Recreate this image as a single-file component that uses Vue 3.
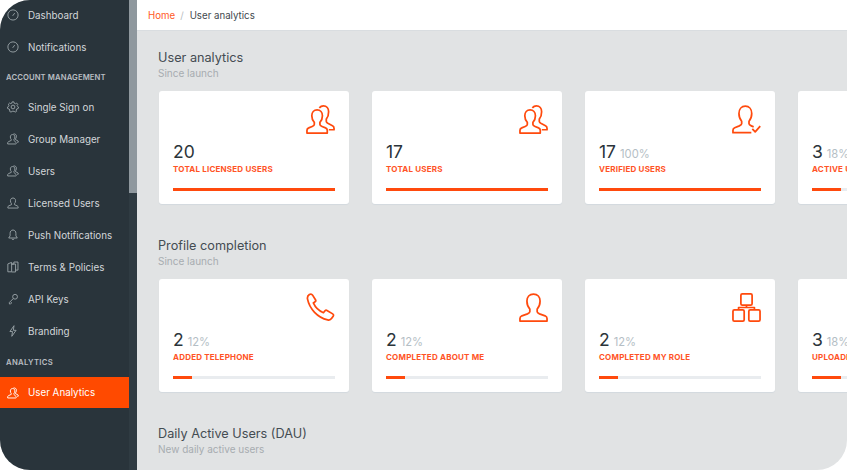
<script setup>
const menuTop = [
  { label: 'Dashboard', icon: 'gauge' },
  { label: 'Notifications', icon: 'gauge' }
];
const menuAccount = [
  { label: 'Single Sign on', icon: 'gear' },
  { label: 'Group Manager', icon: 'users' },
  { label: 'Users', icon: 'users' },
  { label: 'Licensed Users', icon: 'user' },
  { label: 'Push Notifications', icon: 'bell' },
  { label: 'Terms & Policies', icon: 'docs' },
  { label: 'API Keys', icon: 'key' },
  { label: 'Branding', icon: 'bolt' }
];

const userStats = [
  { value: '20', label: 'TOTAL LICENSED USERS', pct: 100, icon: 'users' },
  { value: '17', label: 'TOTAL USERS', pct: 100, icon: 'users' },
  { value: '17', percent: '100%', label: 'VERIFIED USERS', pct: 100, icon: 'check' },
  { value: '3', percent: '18%', label: 'ACTIVE USERS', pct: 18, icon: 'user' }
];
const profileStats = [
  { value: '2', percent: '12%', label: 'ADDED TELEPHONE', pct: 12, icon: 'phone' },
  { value: '2', percent: '12%', label: 'COMPLETED ABOUT ME', pct: 12, icon: 'user' },
  { value: '2', percent: '12%', label: 'COMPLETED MY ROLE', pct: 12, icon: 'org' },
  { value: '3', percent: '18%', label: 'UPLOADED PHOTO', pct: 18, icon: 'user' }
];
</script>

<template>
  <div class="screen">
    <aside class="sidebar">
      <nav class="menu">
        <a v-for="item in menuTop" :key="item.label" class="menu-item">
          <svg class="menu-icon" viewBox="0 0 14 14" fill="none" stroke="currentColor" stroke-width="1.1">
            <path d="M4.4 12.4A6 6 0 1 1 9.6 12.4" />
            <path d="M4.4 12.4Q7 13.4 9.6 12.4" />
            <path d="M6.6 8L9 4.8" />
          </svg>
          {{ item.label }}
        </a>
        <div class="menu-heading">ACCOUNT MANAGEMENT</div>
        <a v-for="item in menuAccount" :key="item.label" class="menu-item">
          <svg class="menu-icon" viewBox="0 0 14 14" fill="none" stroke="currentColor" stroke-width="1.1">
            <template v-if="item.icon === 'gear'">
              <circle cx="7" cy="7" r="2.2" />
              <path d="M6 1H8L8.4 2.6L9.9 3.2L11.3 2.4L12.6 4L11.7 5.3L12.1 6.2L13.4 7L12.9 9L11.4 9.2L10.7 10.6L11.2 12L9.5 13L8.3 12L6 12L4.7 13L3 12L3.3 10.5L2.5 9.3L.9 9L.6 7L2 6.2L2.3 5L1.6 3.7L3 2.4L4.4 3.1L5.6 2.5Z" />
            </template>
            <template v-else-if="item.icon === 'users'">
              <path d="M6.5 1.8C4.8 1.8 3.9 3 3.9 4.6C3.9 6 4.5 7.2 5 7.8V8.6L1.6 10.2C1 10.5 .8 11 .8 11.5V12.8H10.2C11 12.8 11 12 10.7 11.2L8 8.6V7.8C8.6 7.2 9.2 6 9.2 4.6C9.2 3 8.2 1.8 6.5 1.8Z" />
              <path d="M7.5 1.2C9.6 .7 11 2 11 3.8C11 5.2 10.4 6.3 9.9 6.9V7.8L12.6 9C13.2 9.3 13.3 10 13.2 10.7H11.6" />
            </template>
            <template v-else-if="item.icon === 'user'">
              <path d="M7 1.2C5 1.2 4 2.6 4 4.4C4 6 4.7 7.2 5.3 7.9V8.9L2 10.4C1.3 10.7 1 11.2 1 11.8V12.9H13V11.8C13 11.2 12.7 10.7 12 10.4L8.7 8.9V7.9C9.3 7.2 10 6 10 4.4C10 2.6 9 1.2 7 1.2Z" />
            </template>
            <template v-else-if="item.icon === 'bell'">
              <path d="M7 1.2C4.8 1.2 3.6 3 3.6 5V8L2 10.5H12L10.4 8V5C10.4 3 9.2 1.2 7 1.2Z" />
              <path d="M5.6 11.4C5.8 12.6 8.2 12.6 8.4 11.4" />
            </template>
            <template v-else-if="item.icon === 'docs'">
              <path d="M1 3.4L5.4 1.6V12.6H1Z" />
              <path d="M5.4 3.6H8V1.2H12.8V10.6H10" />
              <path d="M5.4 3.6H10V12.8H5.4" />
            </template>
            <template v-else-if="item.icon === 'key'">
              <circle cx="9.4" cy="4.4" r="2.8" />
              <path d="M7.4 6.4L2.8 11V12.8H4.2L5 12V10.6" />
            </template>
            <template v-else>
              <path d="M8.2 .8L3.4 7.6H6.4L5.6 13.2L10.6 6.2H7.4Z" />
            </template>
          </svg>
          {{ item.label }}
        </a>
        <div class="menu-heading analytics">ANALYTICS</div>
        <a class="menu-item active">
          <svg class="menu-icon" viewBox="0 0 14 14" fill="none" stroke="currentColor" stroke-width="1.1">
            <path d="M6.5 1.8C4.8 1.8 3.9 3 3.9 4.6C3.9 6 4.5 7.2 5 7.8V8.6L1.6 10.2C1 10.5 .8 11 .8 11.5V12.8H10.2C11 12.8 11 12 10.7 11.2L8 8.6V7.8C8.6 7.2 9.2 6 9.2 4.6C9.2 3 8.2 1.8 6.5 1.8Z" />
            <path d="M7.5 1.2C9.6 .7 11 2 11 3.8C11 5.2 10.4 6.3 9.9 6.9V7.8L12.6 9C13.2 9.3 13.3 10 13.2 10.7H11.6" />
          </svg>
          User Analytics
        </a>
      </nav>
      <div class="scrollbar"><div class="thumb"></div></div>
    </aside>

    <main class="main">
      <header class="crumbs">
        <span class="crumb-home">Home</span>
        <span class="crumb-sep">/</span>
        <span>User analytics</span>
      </header>

      <div class="content">
        <section class="section">
          <h2>User analytics</h2>
          <p class="since">Since launch</p>
          <div class="cards">
            <div v-for="card in userStats" :key="card.label" class="card">
              <div class="card-icon">
                <svg v-if="card.icon === 'users'" width="29" height="29" viewBox="0 0 30 30" fill="none" stroke="#ff4a0d" stroke-width="1.8" stroke-linejoin="round">
                  <path d="M11.5 5C8.2 5 6 7.6 6 11C6 14 7.2 16.4 8.6 17.9V20.2C8.6 21.2 7.6 21.7 6.4 22.2L2.8 23.7C1.5 24.2 1 25 1 26.2V29H22V26.2C22 25 21.5 24.2 20.2 23.7L16.6 22.2C15.4 21.7 14.4 21.2 14.4 20.2V17.9C15.8 16.4 17 14 17 11C17 7.6 14.8 5 11.5 5Z" />
                  <path d="M13.8 3C15 1.6 16.4 1 18 1C21.4 1 23.4 3.6 23.4 7C23.4 10.6 22.4 13 21 14.6V17C21 18 21.9 18.6 23 19.2L27.4 21.4C28.6 22 29 22.8 29 24V25.6H23.6" />
                </svg>
                <svg v-else-if="card.icon === 'check'" width="29" height="29" viewBox="0 0 30 30" fill="none" stroke="#ff4a0d" stroke-width="1.8" stroke-linejoin="round">
                  <path d="M20 28.6H1V26C1 24.8 1.6 24 2.8 23.5L7.6 21.6C9 21 10 20.4 10 19.4V16.8C8.4 15 7.2 12.2 7.2 8.8C7.2 4.4 9.8 1.2 13.8 1.2C17.8 1.2 20.4 4.4 20.4 8.8C20.4 12.2 19.2 15 17.6 16.8V19.4C17.6 20.4 18.6 21 20 21.6L22.4 22.6" />
                  <path d="M21 24.6L24 27.8L29.2 21.8" />
                </svg>
                <svg v-else width="29" height="29" viewBox="0 0 30 30" fill="none" stroke="#ff4a0d" stroke-width="1.8" stroke-linejoin="round">
                  <path d="M15 1.2C10.8 1.2 8.2 4.2 8.2 8.4C8.2 12.2 9.8 15.2 11.2 16.6V19.4C11.2 20.4 10.2 21 8.8 21.6L3 23.6C1.6 24.2 1 25 1 26.4V29H29V26.4C29 25 28.4 24.2 27 23.6L21.2 21.6C19.8 21 18.8 20.4 18.8 19.4V16.6C20.2 15.2 21.8 12.2 21.8 8.4C21.8 4.2 19.2 1.2 15 1.2Z" />
                </svg>
              </div>
              <div class="figure">
                <span class="value">{{ card.value }}</span>
                <span v-if="card.percent" class="percent">{{ card.percent }}</span>
              </div>
              <div class="label">{{ card.label }}</div>
              <div class="track"><div class="fill" :style="{ width: card.pct + '%' }"></div></div>
            </div>
          </div>
        </section>

        <section class="section">
          <h2>Profile completion</h2>
          <p class="since">Since launch</p>
          <div class="cards">
            <div v-for="card in profileStats" :key="card.label" class="card">
              <div class="card-icon">
                <svg v-if="card.icon === 'phone'" width="29" height="29" viewBox="0 0 30 30" fill="none" stroke="#ff4a0d" stroke-width="1.8" stroke-linejoin="round">
                  <path d="M3.5 1.6C4.8 .8 6 1 6.8 2.2L9.8 7C10.3 7.8 10 8.6 9.4 9L7.6 10.3C9.4 14.4 13 18.4 18 20.4L19.6 18.4C20.2 17.8 21 17.6 21.7 18L27.6 21.6C28.5 22.2 28.6 23.2 28.1 24L26.6 26.2C25.6 27.7 24 28.2 22.4 27.8C12 25.4 3.6 16.4 1.6 6.4C1.2 4.6 1.8 2.8 3.5 1.6Z" />
                </svg>
                <svg v-else-if="card.icon === 'org'" width="29" height="29" viewBox="0 0 30 30" fill="none" stroke="#ff4a0d" stroke-width="1.8" stroke-linejoin="round">
                  <rect x="9.2" y="1" width="11.6" height="11.6" rx="1.4" />
                  <rect x="1" y="17.4" width="11.6" height="11.6" rx="1.4" />
                  <rect x="17.4" y="17.4" width="11.6" height="11.6" rx="1.4" />
                  <path d="M15 12.6V15H6.8V17.4M15 15H23.2V17.4" />
                </svg>
                <svg v-else width="29" height="29" viewBox="0 0 30 30" fill="none" stroke="#ff4a0d" stroke-width="1.8" stroke-linejoin="round">
                  <path d="M15 1.2C10.8 1.2 8.2 4.2 8.2 8.4C8.2 12.2 9.8 15.2 11.2 16.6V19.4C11.2 20.4 10.2 21 8.8 21.6L3 23.6C1.6 24.2 1 25 1 26.4V29H29V26.4C29 25 28.4 24.2 27 23.6L21.2 21.6C19.8 21 18.8 20.4 18.8 19.4V16.6C20.2 15.2 21.8 12.2 21.8 8.4C21.8 4.2 19.2 1.2 15 1.2Z" />
                </svg>
              </div>
              <div class="figure">
                <span class="value">{{ card.value }}</span>
                <span class="percent">{{ card.percent }}</span>
              </div>
              <div class="label">{{ card.label }}</div>
              <div class="track"><div class="fill" :style="{ width: card.pct + '%' }"></div></div>
            </div>
          </div>
        </section>

        <section class="section">
          <h2>Daily Active Users (DAU)</h2>
          <p class="since">New daily active users</p>
        </section>
      </div>
    </main>
  </div>
</template>

<style>
html,
body {
  margin: 0;
  background: #fff;
}
</style>

<style scoped>
.screen {
  display: flex;
  width: 847px;
  height: 470px;
  overflow: hidden;
  border-radius: 30px 0 30px 30px;
  font-family: Inter, "Liberation Sans", sans-serif;
  background: #e1e3e4;
}

.sidebar {
  display: flex;
  flex: none;
  width: 137px;
  background: #29343b;
}

.menu {
  flex: none;
  width: 129px;
  margin-top: -1px;
}

.menu-item {
  display: flex;
  align-items: center;
  gap: 9px;
  height: 32px;
  padding-left: 7px;
  font-size: 9.8px;
  color: #d3d7da;
}

.menu-icon {
  flex: none;
  width: 12px;
  height: 12px;
  color: #98a1a6;
}

.menu-heading {
  padding: 10px 0 0 6px;
  height: 18px;
  font-size: 7.7px;
  font-weight: 600;
  letter-spacing: 0.1px;
  line-height: 10px;
  color: #b9bec2;
}

.menu-heading.analytics {
  height: 12px;
  padding-top: 11px;
  margin-bottom: 7px;
  letter-spacing: 0.3px;
}

.menu-item.active {
  background: #ff4a00;
  color: #fff;
  height: 31px;
}

.menu-item.active .menu-icon {
  color: #fff;
}

.scrollbar {
  flex: none;
  width: 8px;
  background: #2f3b42;
}

.thumb {
  width: 100%;
  height: 193px;
  background: #8f989e;
}

.main {
  flex: none;
  width: 710px;
  min-width: 0;
}

.crumbs {
  display: flex;
  align-items: center;
  gap: 5px;
  height: 30px;
  padding-left: 11px;
  background: #fff;
  border-bottom: 1px solid #d9dde0;
  font-size: 9.7px;
  color: #3f484e;
}

.crumb-home {
  color: #ff5a26;
}

.crumb-sep {
  color: #b8bdc1;
  margin-right: 1px;
}

.content {
  padding: 18px 0 0 21px;
}

.section {
  margin-bottom: 33px;
}

h2 {
  margin: 0;
  font-size: 12.7px;
  line-height: 17px;
  font-weight: 400;
  color: #444c52;
}

.since {
  margin: 1px 0 11px;
  font-size: 10px;
  line-height: 13px;
  color: #a7acb0;
}

.cards {
  display: flex;
  gap: 22.5px;
  padding-left: 0.5px;
}

.card {
  flex: none;
  box-sizing: border-box;
  width: 190.5px;
  height: 113px;
  padding: 14px 14px 0 14.5px;
  background: #fff;
  border-radius: 3px;
  box-shadow: 0 1px 1px #d3d9de;
}

.card-icon {
  display: flex;
  justify-content: flex-end;
  height: 30px;
}

.figure {
  display: flex;
  align-items: baseline;
  gap: 4px;
  margin-top: 5px;
  height: 24px;
}

.value {
  font-size: 17.5px;
  line-height: 24px;
  color: #2b343a;
}

.percent {
  font-size: 11.2px;
  color: #b4bec5;
}

.label {
  font-size: 8px;
  line-height: 11px;
  font-weight: 700;
  letter-spacing: 0.2px;
  color: #ff5326;
  white-space: nowrap;
}

.track {
  height: 3px;
  margin-top: 13px;
  background: #e9ecef;
}

.fill {
  height: 100%;
  background: #ff4a0d;
}
</style>
